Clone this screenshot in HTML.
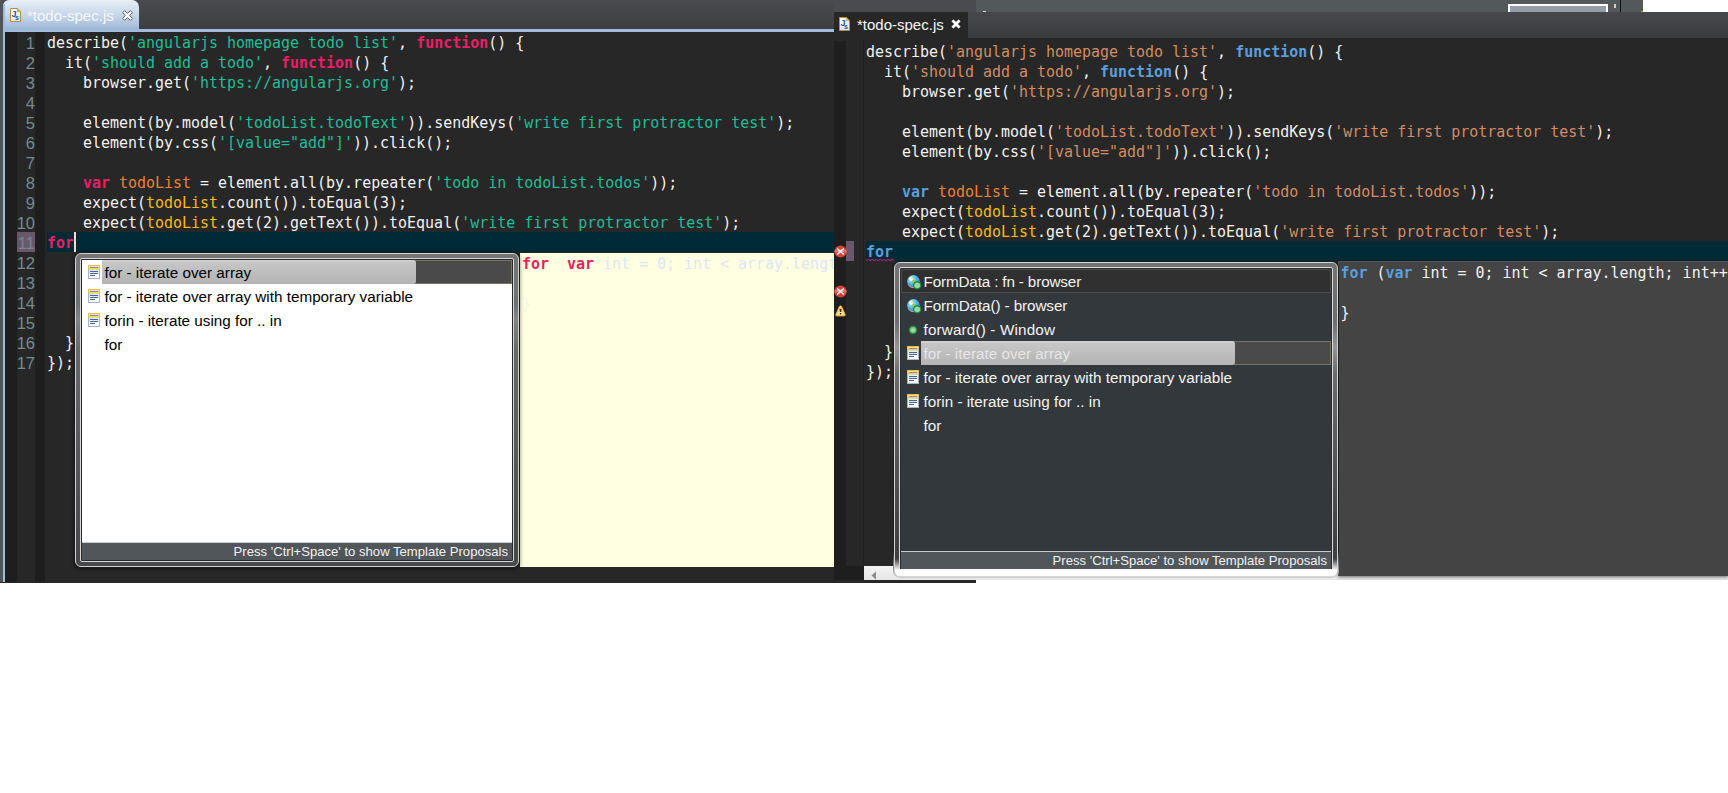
<!DOCTYPE html>
<html lang="en">
<head>
<meta charset="utf-8">
<title>todo-spec.js</title>
<style>
html,body{margin:0;padding:0;}
body{width:1728px;height:793px;background:#fff;overflow:hidden;position:relative;font-family:"Liberation Sans",sans-serif;}
.abs{position:absolute;}
.code{position:absolute;font-family:"DejaVu Sans Mono","Liberation Mono",monospace;font-size:14.96px;line-height:20px;color:#f2f2f2;margin:0;}
.code div{height:20px;white-space:pre;}
.ln{position:absolute;font-family:"Liberation Sans",sans-serif;font-size:16.5px;line-height:20px;color:#748a8f;text-align:right;width:30px;}
.ln div{height:20px;}
/* left theme */
.L .k{color:#ea1f63;font-weight:bold;}
.L .s{color:#1cbf97;}
.L .v{color:#ef8033;}
.L .u{color:#f9bb17;}
/* right theme */
.R .k{color:#5b9fdc;font-weight:bold;}
.R .s{color:#d48c63;}
.R .v{color:#ef8033;}
.R .u{color:#f9bb17;}
.ui{font-family:"Liberation Sans",sans-serif;font-size:15px;white-space:pre;}
.row{position:absolute;left:0;height:24px;line-height:24px;font-size:15.25px;margin-top:1px;}
.foot{box-sizing:border-box;background:#50565a;border-top:1px solid #c9cbcc;color:#f2f2f2;font-size:13.1px;line-height:17px;text-align:right;padding-right:4px;}
</style>
</head>
<body>

<!-- ================= LEFT PANEL ================= -->
<div class="abs L" id="left" style="left:0;top:0;width:976px;height:583px;background:#272727;overflow:hidden;">
  <!-- tab bar -->
  <div class="abs" style="left:0;top:0;width:834px;height:29px;background:linear-gradient(#4b4c4f,#3c3d3f);"></div>
  <div class="abs" style="left:3px;top:29px;width:831px;height:3px;background:#a2badb;"></div>
  <!-- tab -->
  <div class="abs" style="left:3px;top:0;width:136px;height:30px;border-radius:6px 7px 0 0;background:linear-gradient(#e8eef6,#c4d4e7 55%,#9cb6d7);"></div>
  <svg class="abs" style="left:10px;top:8px;" width="11" height="14" viewBox="0 0 11 14"><defs><linearGradient id="g1" x1="0" y1="0" x2="0" y2="1"><stop offset="0" stop-color="#ffffff"/><stop offset="1" stop-color="#dfe4f6"/></linearGradient></defs><path d="M0.5 0.5 H7.2 L10.5 3.8 V13.5 H0.5Z" fill="url(#g1)" stroke="#b28f3e"/><path d="M7.2 0.5 V3.8 H10.5Z" fill="#e3c274" stroke="#b28f3e" stroke-width=".6"/><text x="1.4" y="9.4" font-family="Liberation Sans, sans-serif" font-weight="bold" font-size="9" fill="#1d5ca6">J</text><text x="5" y="12.2" font-family="Liberation Sans, sans-serif" font-weight="bold" font-size="7" fill="#1d5ca6">s</text></svg>
  <div class="abs ui" style="left:27px;top:6px;font-size:15px;line-height:20px;color:#f6f8fb;">*todo-spec.js</div>
  <svg class="abs" style="left:121.5px;top:9.5px;" width="11" height="11" viewBox="0 0 11 11"><path d="M0.6 2.6 L2.6 0.6 L5.5 3.4 L8.4 0.6 L10.4 2.6 L7.6 5.5 L10.4 8.4 L8.4 10.4 L5.5 7.6 L2.6 10.4 L0.6 8.4 L3.4 5.5Z" fill="#ffffff" stroke="#555a5e" stroke-width="1" stroke-linejoin="round"/></svg>
  <!-- left borders -->
  <div class="abs" style="left:0;top:0;width:3px;height:582px;background:#4f5558;"></div>
  <div class="abs" style="left:3px;top:4px;width:2px;height:578px;background:#a2badb;"></div>
  <!-- gutters -->
  <div class="abs" style="left:5px;top:32px;width:12px;height:550px;background:#1e1e1e;"></div>
  <div class="abs" style="left:35px;top:32px;width:10px;height:550px;background:#1e1e1e;"></div>
  <!-- current line -->
  <div class="abs" style="left:47px;top:232px;width:787px;height:20px;background:#002b36;"></div>
  <div class="abs" style="left:17px;top:232px;width:18px;height:20px;background:#69586c;"></div>
  <div class="ln" style="left:5px;top:33px;">
<div>1</div><div>2</div><div>3</div><div>4</div><div>5</div><div>6</div><div>7</div><div>8</div><div>9</div><div>10</div><div style="color:#73898d">11</div><div>12</div><div>13</div><div>14</div><div>15</div><div>16</div><div>17</div>
  </div>
  <div class="code" style="left:47px;top:33px;">
<div>describe(<span class="s">'angularjs homepage todo list'</span>, <span class="k">function</span>() {</div>
<div>  it(<span class="s">'should add a todo'</span>, <span class="k">function</span>() {</div>
<div>    browser.get(<span class="s">'https://angularjs.org'</span>);</div>
<div> </div>
<div>    element(by.model(<span class="s">'todoList.todoText'</span>)).sendKeys(<span class="s">'write first protractor test'</span>);</div>
<div>    element(by.css(<span class="s">'[value="add"]'</span>)).click();</div>
<div> </div>
<div>    <span class="k">var</span> <span class="v">todoList</span> = element.all(by.repeater(<span class="s">'todo in todoList.todos'</span>));</div>
<div>    expect(<span class="u">todoList</span>.count()).toEqual(3);</div>
<div>    expect(<span class="u">todoList</span>.get(2).getText()).toEqual(<span class="s">'write first protractor test'</span>);</div>
<div><span class="k">for</span></div>
<div> </div>
<div> </div>
<div> </div>
<div> </div>
<div>  }</div>
<div>});</div>
  </div>
  <!-- caret -->
  <div class="abs" style="left:74px;top:232px;width:2px;height:20px;background:#ffdcd0;"></div>

</div>

<!-- ================= RIGHT PANEL ================= -->
<div class="abs R" id="right" style="left:834px;top:0;width:894px;height:580px;overflow:hidden;background:#fff;">
  <!-- top strip -->
  <div class="abs" style="left:0;top:0;width:809px;height:12px;background:#53585b;"></div>
  <div class="abs" style="left:0;top:0;width:142px;height:12px;background:#4a4b4e;"></div>
  <div class="abs" style="left:149px;top:11px;width:3px;height:1px;background:#d8d8d8;"></div>
  <div class="abs" style="left:674px;top:4px;width:100px;height:8px;box-sizing:border-box;border:2px solid #fff;border-bottom:0;background:#959da6;"></div>
  <div class="abs" style="left:780px;top:4px;width:2px;height:4px;background:#d8d0c0;"></div>
  <div class="abs" style="left:786px;top:0;width:1px;height:12px;background:#101010;"></div>
  <div class="abs" style="left:807px;top:11px;width:2px;height:1px;background:#c89a30;"></div>
  <!-- tab bar -->
  <div class="abs" style="left:0;top:12px;width:894px;height:27px;background:linear-gradient(#47484b,#3a3b3d);"></div>
  <div class="abs" style="left:0;top:12px;width:134px;height:27px;background:#272727;"></div>
  <svg class="abs" style="left:5px;top:17px;" width="11" height="14" viewBox="0 0 11 14"><defs><linearGradient id="g2" x1="0" y1="0" x2="0" y2="1"><stop offset="0" stop-color="#ffffff"/><stop offset="1" stop-color="#dfe4f6"/></linearGradient></defs><path d="M0.5 0.5 H7.2 L10.5 3.8 V13.5 H0.5Z" fill="url(#g2)" stroke="#b28f3e"/><path d="M7.2 0.5 V3.8 H10.5Z" fill="#e3c274" stroke="#b28f3e" stroke-width=".6"/><text x="1.4" y="9.4" font-family="Liberation Sans, sans-serif" font-weight="bold" font-size="9" fill="#1d5ca6">J</text><text x="5" y="12.2" font-family="Liberation Sans, sans-serif" font-weight="bold" font-size="7" fill="#1d5ca6">s</text></svg>
  <div class="abs ui" style="left:23px;top:15px;font-size:15px;line-height:20px;color:#f6f6f6;">*todo-spec.js</div>
  <svg class="abs" style="left:117px;top:19px;" width="10" height="10" viewBox="0 0 11 11"><path d="M0.6 2.6 L2.6 0.6 L5.5 3.4 L8.4 0.6 L10.4 2.6 L7.6 5.5 L10.4 8.4 L8.4 10.4 L5.5 7.6 L2.6 10.4 L0.6 8.4 L3.4 5.5Z" fill="#ffffff" stroke="#cfcfcf" stroke-width=".3" stroke-linejoin="round"/></svg>
  <!-- editor -->
  <div class="abs" style="left:0;top:38px;width:894px;height:528px;background:#272727;"></div>
  <div class="abs" style="left:0;top:41px;width:12px;height:539px;background:#1e1e1e;"></div>
  <div class="abs" style="left:12px;top:566px;width:18px;height:14px;background:#1e1e1e;"></div>
  <div class="abs" style="left:29px;top:41px;width:1px;height:525px;background:#202020;"></div>
  <!-- horizontal scrollbar -->
  <div class="abs" style="left:30px;top:566px;width:864px;height:14px;background:linear-gradient(#f4f4f4,#e6e6e6);"></div>
  <svg class="abs" style="left:37px;top:571px;" width="6" height="9" viewBox="0 0 6 9"><path d="M5 0.5 L0.5 4.5 L5 8.5 Z" fill="#8a8a8a"/></svg>
  <!-- current line -->
  <div class="abs" style="left:32px;top:241px;width:862px;height:20px;background:#002b36;"></div>
  <div class="abs" style="left:12px;top:241px;width:8px;height:20px;background:#69586e;"></div>
  <svg class="abs" style="left:0px;top:245px;" width="13" height="13" viewBox="0 0 13 13"><circle cx="6.5" cy="6.5" r="6.1" fill="#d8403c"/><path d="M0.6 5.2 Q6.5 3.6 12.4 5.2 L12.4 7.6 Q6.5 6.4 0.6 7.6Z" fill="#ec8a86" opacity=".75"/><path d="M3.6 3 L6.5 5.6 L9.4 3 L10.3 3.9 L7.5 6.5 L10.3 9.1 L9.4 10 L6.5 7.4 L3.6 10 L2.7 9.1 L5.5 6.5 L2.7 3.9Z" fill="#fff"/></svg><svg class="abs" style="left:0px;top:285px;" width="13" height="13" viewBox="0 0 13 13"><circle cx="6.5" cy="6.5" r="6.1" fill="#d8403c"/><path d="M0.6 5.2 Q6.5 3.6 12.4 5.2 L12.4 7.6 Q6.5 6.4 0.6 7.6Z" fill="#ec8a86" opacity=".75"/><path d="M3.6 3 L6.5 5.6 L9.4 3 L10.3 3.9 L7.5 6.5 L10.3 9.1 L9.4 10 L6.5 7.4 L3.6 10 L2.7 9.1 L5.5 6.5 L2.7 3.9Z" fill="#fff"/></svg><svg class="abs" style="left:0.5px;top:304.5px;" width="11" height="12" viewBox="0 0 12 13"><path d="M6 0.8 Q7 0.8 7.4 1.8 L11.3 10.4 Q11.6 12 10 12 L2 12 Q0.4 12 0.7 10.4 L4.6 1.8 Q5 0.8 6 0.8Z" fill="#f6cf6c" stroke="#e0a83a" stroke-width=".8"/><path d="M6 2.5 L9.6 10.6 L2.4 10.6Z" fill="#fbe7a6"/><rect x="5.1" y="4" width="1.9" height="3.6" rx=".6" fill="#4a2c0c"/><rect x="5.1" y="8.6" width="1.9" height="1.8" rx=".5" fill="#4a2c0c"/></svg>
  <svg class="abs" style="left:32px;top:258px;" width="28" height="4" viewBox="0 0 28 4"><path d="M0 3 L2 1 L4 3 L6 1 L8 3 L10 1 L12 3 L14 1 L16 3 L18 1 L20 3 L22 1 L24 3 L26 1 L28 3" fill="none" stroke="#e6007e" stroke-width="1"/></svg>
  <div class="code" style="left:32px;top:42px;">
<div>describe(<span class="s">'angularjs homepage todo list'</span>, <span class="k">function</span>() {</div>
<div>  it(<span class="s">'should add a todo'</span>, <span class="k">function</span>() {</div>
<div>    browser.get(<span class="s">'https://angularjs.org'</span>);</div>
<div> </div>
<div>    element(by.model(<span class="s">'todoList.todoText'</span>)).sendKeys(<span class="s">'write first protractor test'</span>);</div>
<div>    element(by.css(<span class="s">'[value="add"]'</span>)).click();</div>
<div> </div>
<div>    <span class="k">var</span> <span class="v">todoList</span> = element.all(by.repeater(<span class="s">'todo in todoList.todos'</span>));</div>
<div>    expect(<span class="u">todoList</span>.count()).toEqual(3);</div>
<div>    expect(<span class="u">todoList</span>.get(2).getText()).toEqual(<span class="s">'write first protractor test'</span>);</div>
<div><span class="k">for</span></div>
<div> </div>
<div> </div>
<div> </div>
<div> </div>
<div>  }</div>
<div>});</div>
  </div>

</div>

<!--POPUPS-->
<!-- ===== left tooltip (yellow) ===== -->
<div class="abs L" style="left:520px;top:253px;width:314px;height:314px;background:#ffffe1;overflow:hidden;">
  <div class="code" style="left:2px;top:1px;color:#dbe6f6;"><div><span class="k">for</span> <span style="color:#f6f6e3">(</span><span class="k">var</span> int = 0; int &lt; array.length; int++<span style="color:#f6f6e3">) {</span></div><div> </div><div style="color:#f6f6e3">}</div></div>
</div>
<!-- ===== left popup ===== -->
<div class="abs" style="left:74px;top:252px;width:446px;height:316px;border-radius:7px;background:#1c1c1c;box-shadow:0 1px 4px rgba(0,0,0,.45);"></div>
<div class="abs" style="left:75px;top:253px;width:444px;height:314px;box-sizing:border-box;border:1px solid #cfd0d0;border-radius:6px;background:linear-gradient(#747678 0,#6e7072 50px,#808486 65px,#68696b 95px,#48494b 300px);"></div>
<div class="abs" style="left:80px;top:258px;width:434px;height:304px;box-sizing:border-box;border:1px solid #d6d6d6;border-radius:2px;background:#2a2a2a;"></div>
<div class="abs" style="left:82px;top:260px;width:430px;height:300px;background:#fff;overflow:hidden;">
  <div class="abs" style="left:20px;top:0;width:410px;height:24px;box-sizing:border-box;background:#4a4a4a;border:1px solid #77745f;"></div>
  <div class="abs" style="left:20px;top:0;width:314px;height:24px;border-radius:0 3px 3px 0;background:linear-gradient(#d4d4d4,#c6c6c6 10%,#b4b4b4);"></div>
  <svg class="abs" style="left:6px;top:5px;" width="12" height="14" viewBox="0 0 12 14"><rect x="0.5" y="0.5" width="11" height="13" fill="#fdfefe" stroke="#a4b2d2"/><rect x="1" y="4" width="10" height="5" fill="#dff0fb"/><rect x="0.5" y="0.5" width="11" height="3.5" fill="#fbe48c" stroke="#eec04a"/><rect x="2" y="2" width="8" height="1" fill="#8a84c8"/><rect x="2" y="6" width="8" height="1" fill="#4b5f9b"/><rect x="2" y="8" width="8" height="1" fill="#4b5f9b"/><rect x="2" y="10" width="5" height="1" fill="#4b5f9b"/></svg><svg class="abs" style="left:6px;top:29px;" width="12" height="14" viewBox="0 0 12 14"><rect x="0.5" y="0.5" width="11" height="13" fill="#fdfefe" stroke="#a4b2d2"/><rect x="1" y="4" width="10" height="5" fill="#dff0fb"/><rect x="0.5" y="0.5" width="11" height="3.5" fill="#fbe48c" stroke="#eec04a"/><rect x="2" y="2" width="8" height="1" fill="#8a84c8"/><rect x="2" y="6" width="8" height="1" fill="#4b5f9b"/><rect x="2" y="8" width="8" height="1" fill="#4b5f9b"/><rect x="2" y="10" width="5" height="1" fill="#4b5f9b"/></svg><svg class="abs" style="left:6px;top:53px;" width="12" height="14" viewBox="0 0 12 14"><rect x="0.5" y="0.5" width="11" height="13" fill="#fdfefe" stroke="#a4b2d2"/><rect x="1" y="4" width="10" height="5" fill="#dff0fb"/><rect x="0.5" y="0.5" width="11" height="3.5" fill="#fbe48c" stroke="#eec04a"/><rect x="2" y="2" width="8" height="1" fill="#8a84c8"/><rect x="2" y="6" width="8" height="1" fill="#4b5f9b"/><rect x="2" y="8" width="8" height="1" fill="#4b5f9b"/><rect x="2" y="10" width="5" height="1" fill="#4b5f9b"/></svg>
  <div class="row ui" style="top:0;left:22.5px;color:#000;">for - iterate over array</div>
  <div class="row ui" style="top:24px;left:22.5px;color:#000;">for - iterate over array with temporary variable</div>
  <div class="row ui" style="top:48px;left:22.5px;color:#000;">forin - iterate using for .. in</div>
  <div class="row ui" style="top:72px;left:22.5px;color:#000;">for</div>
  <div class="abs ui foot" style="left:0;top:282px;width:430px;height:18px;">Press 'Ctrl+Space' to show Template Proposals</div>
</div>

<!-- ===== right tooltip (dark) ===== -->
<div class="abs R" style="left:1338px;top:261px;width:390px;height:315px;background:#444444;border-top:1px solid #565656;border-left:1px solid #505050;box-sizing:border-box;overflow:hidden;box-shadow:0 1px 3px rgba(0,0,0,.55);">
  <div class="code" style="left:1.5px;top:1px;"><div><span class="k">for</span> (<span class="k">var</span> int = 0; int &lt; array.length; int++) {</div><div> </div><div>}</div></div>
</div>
<!-- ===== right popup ===== -->
<div class="abs" style="left:893px;top:261px;width:446px;height:317px;border-radius:7px;background:linear-gradient(#1c1c1c 0,#1c1c1c 290px,#cfcfcf 316px);"></div>
<div class="abs" style="left:894px;top:262px;width:444px;height:315px;box-sizing:border-box;border:1px solid #d4d5d5;border-radius:6px;background:linear-gradient(#707274 0,#6c6e70 60px,#929496 84px,#6a6c6e 110px,#3e4042 285px,#3e4042 296px,#ffffff 307px);"></div>
<div class="abs" style="left:899px;top:267px;width:434px;height:304px;box-sizing:border-box;border:1px solid #dadada;border-radius:2px;background:#2a2a2a;"></div>
<div class="abs" style="left:899px;top:569px;width:434px;height:2px;background:#fbfbfb;"></div>
<div class="abs" style="left:901px;top:269px;width:430px;height:300px;background:#33383c;overflow:hidden;">
  <div class="abs" style="left:0;top:0;width:430px;height:24px;background:#303030;box-sizing:border-box;border:1px solid #4c4c4c;"></div>
  <div class="abs" style="left:20px;top:72px;width:410px;height:24px;background:#4a4a4a;box-sizing:border-box;border:1px solid #77745f;"></div>
  <div class="abs" style="left:20px;top:72px;width:314px;height:24px;border-radius:0 3px 3px 0;background:linear-gradient(#d4d4d4,#c6c6c6 10%,#b4b4b4);"></div>
  <svg class="abs" style="left:6px;top:6px;" width="15" height="15" viewBox="0 0 15 15"><defs><radialGradient id="gg1" cx="0.35" cy="0.3" r="0.8"><stop offset="0" stop-color="#eaf7fc"/><stop offset=".42" stop-color="#58bdea"/><stop offset="1" stop-color="#3a62cf"/></radialGradient></defs><circle cx="6.5" cy="6.5" r="6.4" fill="url(#gg1)"/><path d="M1.2 10 Q3.5 13 7.5 12.8" fill="none" stroke="#d9ca86" stroke-width=".9" opacity=".8"/><path d="M5.6 2 Q8 2.6 7.2 4.6 Q8.8 5.6 7.6 7.2 Q6.4 8.2 6.2 10 Q4.8 8.2 5.2 6.2 Q4 4 5.6 2Z" fill="#8fca58"/><ellipse cx="4.3" cy="4" rx="2.3" ry="1.7" fill="#ffffff" opacity=".85"/><path d="M4.6 3 L5.4 3.2 L5.2 4.4Z" fill="#8a7a40" opacity=".8"/><circle cx="10.2" cy="10.3" r="4.1" fill="#0f8c3e"/><circle cx="10.2" cy="10.3" r="2.9" fill="#9fd49c"/></svg><svg class="abs" style="left:6px;top:30px;" width="15" height="15" viewBox="0 0 15 15"><defs><radialGradient id="gg2" cx="0.35" cy="0.3" r="0.8"><stop offset="0" stop-color="#eaf7fc"/><stop offset=".42" stop-color="#58bdea"/><stop offset="1" stop-color="#3a62cf"/></radialGradient></defs><circle cx="6.5" cy="6.5" r="6.4" fill="url(#gg2)"/><path d="M1.2 10 Q3.5 13 7.5 12.8" fill="none" stroke="#d9ca86" stroke-width=".9" opacity=".8"/><path d="M5.6 2 Q8 2.6 7.2 4.6 Q8.8 5.6 7.6 7.2 Q6.4 8.2 6.2 10 Q4.8 8.2 5.2 6.2 Q4 4 5.6 2Z" fill="#8fca58"/><ellipse cx="4.3" cy="4" rx="2.3" ry="1.7" fill="#ffffff" opacity=".85"/><path d="M4.6 3 L5.4 3.2 L5.2 4.4Z" fill="#8a7a40" opacity=".8"/><circle cx="10.2" cy="10.3" r="4.1" fill="#0f8c3e"/><circle cx="10.2" cy="10.3" r="2.9" fill="#9fd49c"/></svg><svg class="abs" style="left:7px;top:56px;" width="10" height="10" viewBox="0 0 10 10"><circle cx="5" cy="5" r="4.4" fill="#1f8a42"/><circle cx="5" cy="5" r="3" fill="#86cc8a"/><circle cx="5" cy="5" r="1.6" fill="#a6dba6"/></svg><svg class="abs" style="left:6px;top:77px;" width="12" height="14" viewBox="0 0 12 14"><rect x="0.5" y="0.5" width="11" height="13" fill="#fdfefe" stroke="#a4b2d2"/><rect x="1" y="4" width="10" height="5" fill="#dff0fb"/><rect x="0.5" y="0.5" width="11" height="3.5" fill="#fbe48c" stroke="#eec04a"/><rect x="2" y="2" width="8" height="1" fill="#8a84c8"/><rect x="2" y="6" width="8" height="1" fill="#4b5f9b"/><rect x="2" y="8" width="8" height="1" fill="#4b5f9b"/><rect x="2" y="10" width="5" height="1" fill="#4b5f9b"/></svg><svg class="abs" style="left:6px;top:101px;" width="12" height="14" viewBox="0 0 12 14"><rect x="0.5" y="0.5" width="11" height="13" fill="#fdfefe" stroke="#a4b2d2"/><rect x="1" y="4" width="10" height="5" fill="#dff0fb"/><rect x="0.5" y="0.5" width="11" height="3.5" fill="#fbe48c" stroke="#eec04a"/><rect x="2" y="2" width="8" height="1" fill="#8a84c8"/><rect x="2" y="6" width="8" height="1" fill="#4b5f9b"/><rect x="2" y="8" width="8" height="1" fill="#4b5f9b"/><rect x="2" y="10" width="5" height="1" fill="#4b5f9b"/></svg><svg class="abs" style="left:6px;top:125px;" width="12" height="14" viewBox="0 0 12 14"><rect x="0.5" y="0.5" width="11" height="13" fill="#fdfefe" stroke="#a4b2d2"/><rect x="1" y="4" width="10" height="5" fill="#dff0fb"/><rect x="0.5" y="0.5" width="11" height="3.5" fill="#fbe48c" stroke="#eec04a"/><rect x="2" y="2" width="8" height="1" fill="#8a84c8"/><rect x="2" y="6" width="8" height="1" fill="#4b5f9b"/><rect x="2" y="8" width="8" height="1" fill="#4b5f9b"/><rect x="2" y="10" width="5" height="1" fill="#4b5f9b"/></svg>
  <div class="row ui" style="top:0;left:22.5px;color:#f4f4f4;letter-spacing:-0.15px;">FormData : fn - browser</div>
  <div class="row ui" style="top:24px;left:22.5px;color:#f4f4f4;letter-spacing:-0.1px;">FormData() - browser</div>
  <div class="row ui" style="top:48px;left:22.5px;color:#f4f4f4;letter-spacing:0.16px;">forward() - Window</div>
  <div class="row ui" style="top:72px;left:22.5px;color:#e6e6e6;">for - iterate over array</div>
  <div class="row ui" style="top:96px;left:22.5px;color:#f4f4f4;">for - iterate over array with temporary variable</div>
  <div class="row ui" style="top:120px;left:22.5px;color:#f4f4f4;">forin - iterate using for .. in</div>
  <div class="row ui" style="top:144px;left:22.5px;color:#f4f4f4;">for</div>
  <div class="abs ui foot" style="left:0;top:282px;width:430px;height:18px;">Press 'Ctrl+Space' to show Template Proposals</div>
</div>
<!--/POPUPS-->

</body>
</html>
